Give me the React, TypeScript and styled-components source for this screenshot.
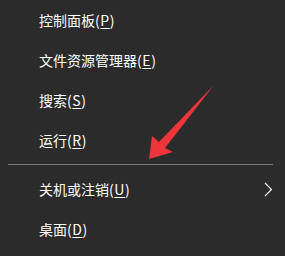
import * as React from 'react';
import styled, { createGlobalStyle } from 'styled-components';

const GlobalStyle = createGlobalStyle`
	html, body {
		margin: 0;
		padding: 0;
		background: #2b2b2b;
	}
`;

const Menu = styled.div`
	position: relative;
	width: 285px;
	height: 256px;
	background: #2b2b2b;
	color: #ffffff;
	font-family: 'Noto Sans CJK SC', 'Noto Sans', sans-serif;
	font-size: 14px;
	overflow: hidden;
`;

const Item = styled.div`
	display: flex;
	align-items: center;
	height: 40px;
	padding-left: 39px;
	padding-right: 12px;
`;

const Label = styled.span`
	flex: 1;
`;

const Paren = styled.span`
	letter-spacing: 0.6px;
`;

const Key = styled.span`
	text-decoration: underline;
	text-underline-offset: 2px;
`;

const Separator = styled.div`
	height: 1px;
	margin: 4px 12px 4px 8px;
	background: #7a7a7a;
`;

const Chevron = styled.svg`
	width: 9px;
	height: 15px;
`;

const Arrow = styled.svg`
	position: absolute;
	left: 0;
	top: 0;
	pointer-events: none;
`;

interface MenuEntry {
	text: string;
	key: string;
	sub?: boolean;
}

const top: MenuEntry[] = [
	{ text: '控制面板', key: 'P' },
	{ text: '文件资源管理器', key: 'E' },
	{ text: '搜索', key: 'S' },
	{ text: '运行', key: 'R' },
];

const bottom: MenuEntry[] = [
	{ text: '关机或注销', key: 'U', sub: true },
	{ text: '桌面', key: 'D' },
];

const Entry = ({ entry }: { entry: MenuEntry }) => (
	<Item>
		<Label>
			{entry.text}
			<Paren>
				(<Key>{entry.key}</Key>)
			</Paren>
		</Label>
		{entry.sub && (
			<Chevron viewBox="0 0 9 15">
				<path d="M1 1 L7.5 7.5 L1 14" fill="none" stroke="#ffffff" strokeWidth="1.1" />
			</Chevron>
		)}
	</Item>
);

const App = () => {
	return (
		<Menu>
			<GlobalStyle />
			{top.map((e) => (
				<Entry key={e.key} entry={e} />
			))}
			<Separator />
			{bottom.map((e) => (
				<Entry key={e.key} entry={e} />
			))}
			<Arrow width="285" height="256" viewBox="0 0 285 256">
				<polygon
					points="214,85 165,148 173,152 149,159 152,136 159,142"
					fill="#f0353a"
				/>
			</Arrow>
		</Menu>
	);
};

export default App;
